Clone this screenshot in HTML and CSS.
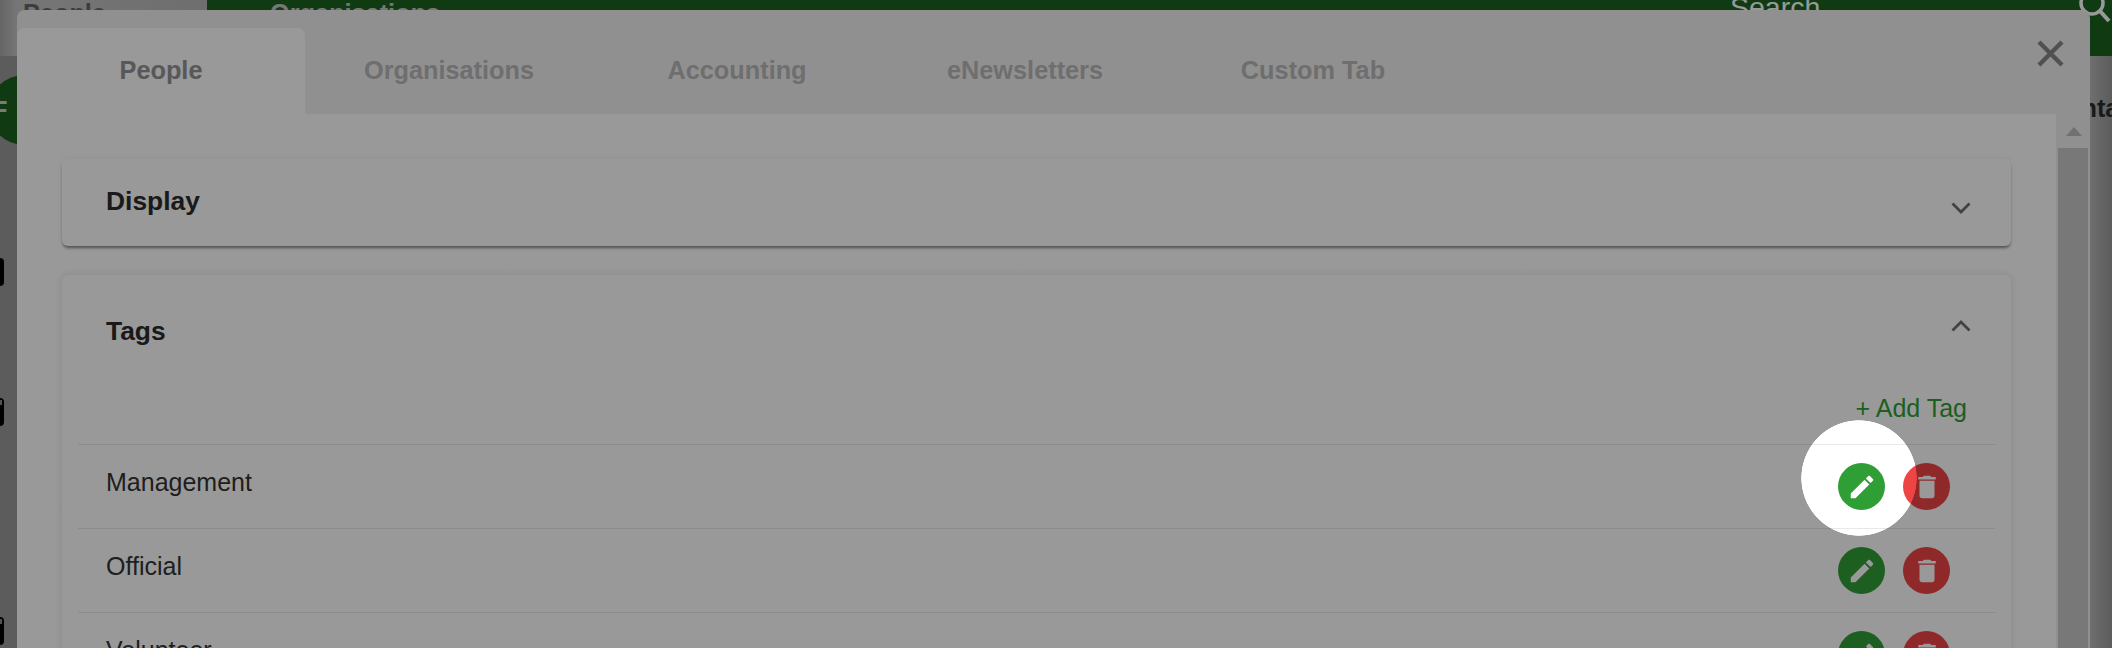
FILE: index.html
```html
<!doctype html>
<html lang="en">
  <head>
    <meta charset="UTF-8" />
    <meta name="viewport" content="width=device-width, initial-scale=1.0" />
    <title>Settings</title>
    <link rel="stylesheet" href="styles.css">
  </head>
  <body>
    <!-- page behind the dialog -->
    <div class="page">
      <header class="topbar">
        <div class="nav-home">People</div>
        <div class="nav-main">
          <span class="nav-link">Organisations</span>
          <div class="search">
            <span class="search-label">Search</span>
            <svg class="search-icon" width="34" height="34" viewBox="0 0 34 34">
              <circle cx="14" cy="3" r="11" fill="none" stroke="currentColor" stroke-width="3.5" />
              <path d="M22 11l9 10" fill="none" stroke="currentColor" stroke-width="4" />
            </svg>
          </div>
        </div>
      </header>
      <div class="page-body">
        <div class="rail">
          <div class="avatar">F</div>
          <div class="rail-key key-one"></div>
          <div class="rail-key key-two"></div>
          <div class="rail-key key-three"></div>
        </div>
        <div class="page-title">Contacts</div>
      </div>
    </div>

    <div class="dialog">
      <nav class="tabs">
        <div class="tab active">People</div>
        <div class="tab">Organisations</div>
        <div class="tab">Accounting</div>
        <div class="tab">eNewsletters</div>
        <div class="tab">Custom Tab</div>
        <button class="close" aria-label="Close">
          <svg width="27" height="27" viewBox="0 0 27 27">
            <path d="M2 2l23 23M25 2L2 25" fill="none" stroke="currentColor" stroke-width="4.5" />
          </svg>
        </button>
      </nav>

      <div class="dialog-body">
        <main class="content">
          <section class="card collapsed">
            <div class="card-head">
              <h2>Display</h2>
              <svg class="chevron" width="20" height="12" viewBox="0 0 20 12">
                <path d="M1.5 1.5L10 10l8.500-8.500" fill="none" stroke="currentColor" stroke-width="2.800" />
              </svg>
            </div>
          </section>

          <section class="card">
            <div class="card-head tags-head">
              <h2>Tags</h2>
              <svg class="chevron" width="20" height="12" viewBox="0 0 20 12">
                <path d="M1.5 10.500L10 2l8.500 8.500" fill="none" stroke="currentColor" stroke-width="2.800" />
              </svg>
            </div>
            <div class="add-row"><a class="add-tag">+ Add Tag</a></div>

            <div class="tag-row">
              <span class="tag-name">Management</span>
              <div class="tag-actions">
                <button class="round edit">
                  <svg width="30" height="30" viewBox="0 0 24 24"><path fill="currentColor" d="M3 17.250V21h3.750L17.810 9.940l-3.750-3.750L3 17.250zM20.710 7.040c.39-.39.39-1.020 0-1.410l-2.340-2.340c-.39-.39-1.020-.39-1.410 0l-1.830 1.830 3.750 3.750 1.830-1.830z" /></svg>
                </button>
                <button class="round remove">
                  <svg width="30" height="30" viewBox="0 0 24 24"><path fill="currentColor" d="M6 19c0 1.100.9 2 2 2h8c1.100 0 2-.9 2-2V7H6v12zM19 4h-3.500l-1-1h-5l-1 1H5v2h14V4z" /></svg>
                </button>
              </div>
            </div>
            <div class="tag-row">
              <span class="tag-name">Official</span>
              <div class="tag-actions">
                <button class="round edit">
                  <svg width="30" height="30" viewBox="0 0 24 24"><path fill="currentColor" d="M3 17.250V21h3.750L17.810 9.940l-3.750-3.750L3 17.250zM20.710 7.040c.39-.39.39-1.020 0-1.410l-2.340-2.340c-.39-.39-1.020-.39-1.410 0l-1.830 1.830 3.750 3.750 1.830-1.830z" /></svg>
                </button>
                <button class="round remove">
                  <svg width="30" height="30" viewBox="0 0 24 24"><path fill="currentColor" d="M6 19c0 1.100.9 2 2 2h8c1.100 0 2-.9 2-2V7H6v12zM19 4h-3.500l-1-1h-5l-1 1H5v2h14V4z" /></svg>
                </button>
              </div>
            </div>
            <div class="tag-row">
              <span class="tag-name">Volunteer</span>
              <div class="tag-actions">
                <button class="round edit">
                  <svg width="30" height="30" viewBox="0 0 24 24"><path fill="currentColor" d="M3 17.250V21h3.750L17.810 9.940l-3.750-3.750L3 17.250zM20.710 7.040c.39-.39.39-1.020 0-1.410l-2.340-2.340c-.39-.39-1.020-.39-1.410 0l-1.830 1.830 3.750 3.750 1.830-1.830z" /></svg>
                </button>
                <button class="round remove">
                  <svg width="30" height="30" viewBox="0 0 24 24"><path fill="currentColor" d="M6 19c0 1.100.9 2 2 2h8c1.100 0 2-.9 2-2V7H6v12zM19 4h-3.500l-1-1h-5l-1 1H5v2h14V4z" /></svg>
                </button>
              </div>
            </div>
          </section>
        </main>

        <div class="scrollbar">
          <div class="scroll-arrow"></div>
          <div class="scroll-thumb"></div>
        </div>
      </div>
    </div>

    <!-- tour spotlight over the first edit button -->
    <div class="spotlight"></div>
  </body>
</html>
```

FILE: styles.css
```css
:root {
  --green: #2f9e35;
  --red: #ef4444;
  --tab-bar: #f0f0f0;
  --row-height: 84px;
}

* {
  box-sizing: border-box;
}

html,
body {
  height: 100%;
}

body {
  margin: 0;
  overflow: hidden;
  background: #999;
  font-family: "Liberation Sans", Arial, sans-serif;
  color: #2b2b2b;
}

button {
  border: none;
  padding: 0;
  background: none;
  font: inherit;
}

/* page behind the dialog */
.page {
  display: flex;
  flex-direction: column;
  height: 648px;
  overflow: hidden;
}

.topbar {
  display: flex;
  flex: none;
  height: 56px;
  font-size: 25.3px;
  font-weight: 700;
}

.nav-home {
  width: 207px;
  padding-left: 23px;
  line-height: 26px;
  background: linear-gradient(90deg, #a8a8a8, #c4c4c4 17px, #b8b8b8);
  color: #666;
}

.nav-main {
  display: flex;
  flex: 1;
  justify-content: space-between;
  padding-left: 63px;
  background: #1a611e;
}

.nav-link {
  line-height: 26px;
  color: #c6c6c6;
}

.search {
  display: flex;
  justify-content: space-between;
  width: 382px;
  color: #fff;
}

.search-label {
  font-size: 28.500px;
  font-weight: 400;
  line-height: 14px;
}

.page-body {
  display: flex;
  flex: 1;
  justify-content: space-between;
  background: linear-gradient(90deg, #999 2090px, #b8b8b8 2090px, #999 2112px);
}

.rail {
  display: flex;
  flex-direction: column;
  width: 60px;
}

.avatar {
  flex: none;
  width: 70px;
  height: 70px;
  margin: 19px 0 0 -11px;
  padding-left: 3px;
  border-radius: 50%;
  background: #1a611e;
  color: #ccc;
  font-size: 25.3px;
  font-weight: 700;
  line-height: 70px;
}

.rail-key {
  display: flex;
  align-items: flex-start;
  flex: none;
  width: 4px;
  height: 28px;
  border-radius: 0 4px 4px 0;
  background: #000;
}

.key-one {
  margin-top: 113px;
}

.key-two {
  margin-top: 112px;
}

.key-three {
  margin-top: 191px;
}

.key-two::after,
.key-three::after {
  content: "";
  width: 2px;
  height: 5px;
  margin-top: 2px;
  background: #888;
}

.page-title {
  flex: none;
  margin: 38px -44px 0 0;
  color: #2b2b2b;
  font-size: 25.3px;
  font-weight: 700;
  white-space: nowrap;
}

/* dialog */
.dialog {
  position: absolute;
  top: 10px;
  left: 17px;
  display: flex;
  flex-direction: column;
  width: 2073px;
  height: 660px;
  border-radius: 8px 8px 0 0;
  background: var(--tab-bar);
}

.tabs {
  position: relative;
  display: flex;
  flex: none;
  height: 104px;
  padding-top: 18px;
}

.tab {
  width: 288px;
  border-radius: 8px 8px 0 0;
  color: #b8b8b8;
  font-size: 25.3px;
  font-weight: 700;
  line-height: 84px;
  text-align: center;
}

.tab.active {
  background: #fff;
  color: #929292;
}

.close {
  position: absolute;
  top: 30px;
  right: 26px;
  display: flex;
  color: #868686;
}

.dialog-body {
  display: flex;
  flex: 1;
}

.content {
  width: 2039px;
  padding: 45px 45px 0;
  background: #fff;
}

.card {
  border-radius: 6px;
  background: #fff;
  box-shadow: 0 0 8px rgba(0, 0, 0, 0.12);
}

.card.collapsed {
  margin-bottom: 29px;
  box-shadow: 0 3px 3px -1px rgba(0, 0, 0, 0.45), 0 0 6px rgba(0, 0, 0, 0.08);
}

.card-head {
  display: flex;
  align-items: center;
  justify-content: space-between;
  height: 87px;
  padding: 0 40px 0 44px;
  color: #6e6e6e;
}

.tags-head {
  height: 112px;
}

.card-head h2 {
  margin: 0;
  color: #2b2b2b;
  font-size: 26.400px;
  font-weight: 700;
}

.collapsed h2 {
  margin-top: -2px;
}

.tags-head .chevron {
  margin-top: -11px;
}

.collapsed .chevron {
  margin-top: 10px;
}

.add-row {
  display: flex;
  justify-content: flex-end;
  height: 57px;
  padding: 6px 44px 0 0;
}

.add-tag {
  color: #2f9e35;
  font-size: 25px;
  line-height: 30px;
}

.tag-row {
  display: flex;
  align-items: center;
  justify-content: space-between;
  height: var(--row-height);
  margin: 0 16px;
  padding: 0 45px 0 28px;
  border-top: 1px solid #e8e8e8;
}

.tag-name {
  margin-top: -9px;
  color: #333;
  font-size: 25px;
}

.tag-actions {
  display: flex;
  gap: 18px;
}

.round {
  display: flex;
  align-items: center;
  justify-content: center;
  width: 47px;
  height: 47px;
  border-radius: 50%;
  color: #fff;
}

.edit {
  background: var(--green);
}

.remove {
  background: var(--red);
}

.scrollbar {
  flex: 1;
  padding-left: 2px;
}

.scroll-arrow {
  width: 0;
  margin: 13px auto 12px;
  border: 8px solid transparent;
  border-top: 0;
  border-bottom: 9px solid #bbb;
}

.scroll-thumb {
  width: 30px;
  height: 500px;
  background: #c8c8c8;
}

/* dim layer with a round hole */
.spotlight {
  position: absolute;
  inset: 0;
  background: radial-gradient(circle 58px at 1859px 478px, transparent 99%, rgba(0, 0, 0, 0.4) 100%);
}
```
